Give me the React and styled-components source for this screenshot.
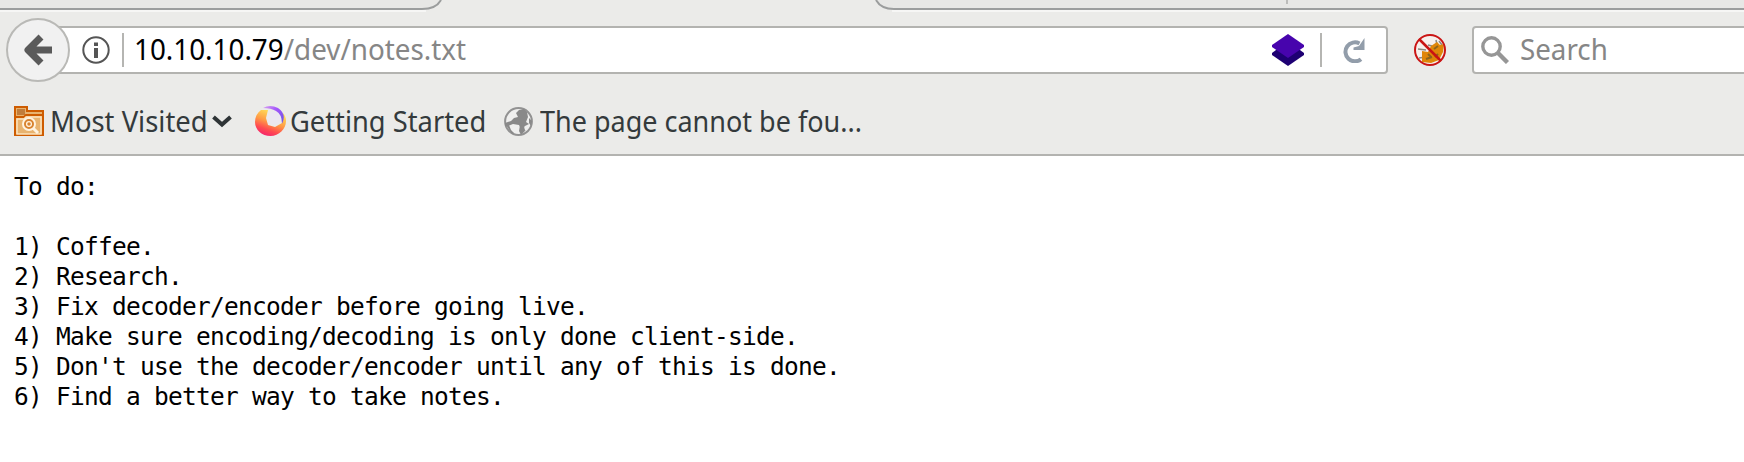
import React from "react";
import styled, { createGlobalStyle } from "styled-components";

const GlobalStyle = createGlobalStyle`
  * { box-sizing: border-box; }
  html, body { margin: 0; background: #fff; overflow: hidden; }
`;

const Browser = styled.div`
  display: flex;
  flex-direction: column;
  width: 1744px;
  height: 462px;
  background: #fff;
  font-family: "Noto Sans", "Open Sans", sans-serif;
`;

const Chrome = styled.header`
  flex: none;
  height: 156px;
  background: #ebebe9;
  border-bottom: 2px solid #b3b3b0;
`;

const TabStrip = styled.svg`
  display: block;
  width: 1744px;
  height: 12px;
`;

const NavBar = styled.div`
  display: flex;
  align-items: center;
  height: 76px;
  padding-left: 6px;
`;

const BackButton = styled.button`
  width: 64px;
  height: 64px;
  flex: none;
  padding: 0;
  display: grid;
  place-items: center;
  border: 2px solid #b9b9b6;
  border-radius: 50%;
  background: #f1f1f1;
  z-index: 1;
`;

const Field = styled.div`
  display: flex;
  align-items: center;
  flex: none;
  height: 48px;
  width: ${(p) => p.$width}px;
  margin-left: ${(p) => p.$offset}px;
  padding-left: ${(p) => p.$inset}px;
  border: 2px solid #b3b3b0;
  border-radius: 4px;
  background: #fff;
`;

const Divider = styled.span`
  flex: none;
  width: 2px;
  height: 34px;
  background: #b5b5b2;
`;

const Icon = styled.svg`
  display: block;
  flex: none;
  width: ${(p) => p.$w}px;
  height: ${(p) => p.$h}px;
  margin-left: ${(p) => p.$left || 0}px;
  margin-right: ${(p) => p.$right || 0}px;
`;

const Label = styled.span`
  flex: none;
  width: ${(p) => p.$width}px;
  margin-left: ${(p) => p.$left || 0}px;
  padding-bottom: ${(p) => p.$lift ?? 3}px;
  font-size: 29.5px;
  line-height: 40px;
  white-space: pre;
  color: ${(p) => p.$color || "#343a3c"};
`;

const Narrow = styled.span`
  display: inline-block;
  transform: scaleX(${(p) => p.$scale});
  transform-origin: 0 50%;
`;

const Path = styled.span`
  color: #868686;
`;

const BookmarksBar = styled.nav`
  display: flex;
  align-items: center;
  height: 66px;
  padding-left: 14px;
`;

const Bookmark = styled.div`
  display: flex;
  align-items: center;
  flex: none;
  width: ${(p) => p.$width}px;
`;

const Notes = styled.pre`
  margin: 0;
  padding: 16px 0 0 14px;
  font: 24.5px/30px "DejaVu Sans Mono", monospace;
  letter-spacing: -0.75px;
  color: #000;
`;

const NOTES = `To do:

1) Coffee.
2) Research.
3) Fix decoder/encoder before going live.
4) Make sure encoding/decoding is only done client-side.
5) Don't use the decoder/encoder until any of this is done.
6) Find a better way to take notes.`;

const Tabs = () => (
  <TabStrip viewBox="0 0 1744 12" fill="none">
    <path d="M0 0H441Q437 9 425 9H0ZM875 0H1744V9H894Q880 9 875 0Z" fill="#e7e7e5" />
    <path d="M0 11H426M892 11H1744" stroke="#f6f6f5" strokeWidth="2" />
    <path d="M0 9H422Q436 9 441 0M876 0Q881 9 894 9H1744" stroke="#9b9d9d" strokeWidth="2" />
    <path d="M1287 0V4" stroke="#bcbcba" strokeWidth="2" />
  </TabStrip>
);

const BackArrow = () => (
  <Icon $w={28} $h={32} viewBox="0 0 28 32" fill="none">
    <path d="M17 3 4 16l13 13M5 16H28" stroke="#5a5a5a" strokeWidth="7" strokeLinejoin="round" />
  </Icon>
);

const Info = () => (
  <Icon $w={28} $h={28} $right={12} viewBox="0 0 28 28">
    <circle cx="14" cy="14" r="12.7" fill="none" stroke="#555" strokeWidth="2" />
    <path d="M12 6.5h4v3.5h-4zM12 12h4v10h-4z" fill="#555" />
  </Icon>
);

const Layers = () => (
  <Icon $w={32} $h={32} $right={16} viewBox="0 0 32 32">
    <path d="M0 19 4 16h24l4 3v2L16 32 0 21z" fill="#1e0073" />
    <path d="M16 0 32 11v2L16 24 0 13v-2z" fill="#4704ad" />
  </Icon>
);

const Reload = () => (
  <Icon $w={24} $h={26} $left={20} viewBox="0 0 24 26">
    <path d="M19 22.200A9.500 9.500 0 1 1 17.500 6.500" fill="none" stroke="#929daa" strokeWidth="4" />
    <path d="M22.500 1v12H11.500V10.500L17 9z" fill="#929daa" />
  </Icon>
);

const Blocked = () => (
  <Icon $w={32} $h={32} $left={26} viewBox="0 0 32 32" fill="none">
    <circle cx="16" cy="16" r="15" fill="#f6f0ed" />
    <path d="M4 15l8 1M22 6l1 5M25 7l3 4M5 24l7-1M14 11l4 1" stroke="#8b8980" strokeWidth="1.5" />
    <path d="M8 17l6 1 3-6 6-4 3 3 4-1-1 8-4 8-8 3-9-1z" fill="#df8608" />
    <path d="M14 20l3 3M20 15l4-3M21 23l3-3M12 25l6-2" stroke="#8d641b" strokeWidth="2" />
    <path d="M5 5 27 27" stroke="#c91414" strokeWidth="2.5" />
    <circle cx="16" cy="16" r="15" stroke="#ca1515" strokeWidth="2" />
  </Icon>
);

const Magnifier = () => (
  <Icon $w={28} $h={28} viewBox="0 0 28 28" fill="none" stroke="#969696">
    <circle cx="10.5" cy="10.5" r="8.7" strokeWidth="3.4" />
    <path d="m17 17 9.5 9.5" strokeWidth="4.4" />
  </Icon>
);

const Folder = () => (
  <Icon $w={30} $h={30} viewBox="0 0 30 30" fill="none">
    <path d="M1 29V1h12v4h16v24z" fill="#e8b36f" stroke="#ce5c00" strokeWidth="2" />
    <path d="M3 3h8v6H3z" fill="#c17d3b" />
    <path d="M2 11h8l2-2h16" stroke="#ce5c00" strokeWidth="2" />
    <path d="M3 28V13h7l2-2h15v17z" stroke="#fbe4bf" strokeWidth="1.5" />
    <circle cx="15" cy="18" r="6" fill="#d9832f" stroke="#fff3e0" strokeWidth="2" />
    <circle cx="15" cy="18" r="2.4" stroke="#fff3e0" strokeWidth="1.3" />
    <path d="m19 22 5 5" stroke="#fff3e0" strokeWidth="3" />
  </Icon>
);

const Chevron = () => (
  <Icon $w={20} $h={14} viewBox="0 0 20 14" fill="none">
    <path d="m1.5 3 8.5 7.500 8.500-7.500" stroke="#2e3436" strokeWidth="4" />
  </Icon>
);

const Firefox = () => (
  <Icon $w={31} $h={32} viewBox="0 0 31 32">
    <defs>
      <linearGradient id="flame" x1=".75" y1=".1" x2=".35" y2="1">
        <stop offset="0" stopColor="#ffe45a" />
        <stop offset=".45" stopColor="#ff9a45" />
        <stop offset=".75" stopColor="#ff4b50" />
        <stop offset="1" stopColor="#f5246c" />
      </linearGradient>
      <linearGradient id="swirl" x1="0" y1="0" x2="1" y2=".7">
        <stop offset="0" stopColor="#d9a5f0" />
        <stop offset=".5" stopColor="#a557fb" />
        <stop offset="1" stopColor="#7556e8" />
      </linearGradient>
    </defs>
    <path d="M6 5C2 8 0 12 0 17c0 8 7 14 15.500 14S31 24 31 16c0-3-1-6-3-8l-1 10-7 4-7-2-2-7 2-8z" fill="url(#flame)" />
    <circle cx="19.500" cy="13" r="7" fill="#ebe8f0" />
    <path d="M8 3Q15-1 23 3q9 6 4 16 0-10-6-13-5-3-13-3z" fill="url(#swirl)" />
  </Icon>
);

const Globe = () => (
  <Icon $w={29} $h={29} viewBox="0 0 29 29">
    <circle cx="14.500" cy="14.500" r="13.400" fill="#efefee" stroke="#929292" strokeWidth="2" />
    <path d="M12 6l3-3 5-1 3 3 1 5-2 5 3 2-4 2-2 2 3 3-5-2-2-4-6-1-5 2-3 0 0-3 6-2 3-3 4-1z" fill="#898989" />
    <path d="M16 18l4 1 1 5-4 4-2-4zM25 11l3 3-1 5-2-3zM2 18l3 0 2 5 3 3-2 1z" fill="#898989" />
  </Icon>
);

export default function App() {
  return (
    <>
      <GlobalStyle />
      <Browser>
        <Chrome>
          <Tabs />
          <NavBar>
            <BackButton aria-label="Back"><BackArrow /></BackButton>
            <Field $width={1338} $offset={-20} $inset={30}>
              <Info />
              <Divider />
              <Label $left={10} $width={1138} $color="#000">
                <Narrow $scale={0.943}>10.10.10.79<Path>/dev/notes.txt</Path></Narrow>
              </Label>
              <Layers />
              <Divider />
              <Reload />
            </Field>
            <Blocked />
            <Field $width={300} $offset={26} $inset={7}>
              <Magnifier />
              <Label $left={11} $width={100} $color="#868686">
                <Narrow $scale={0.94}>Search</Narrow>
              </Label>
            </Field>
          </NavBar>
          <BookmarksBar>
            <Bookmark $width={241}>
              <Folder />
              <Label $left={6} $width={162} $lift={1}><Narrow $scale={0.93}>Most Visited</Narrow></Label>
              <Chevron />
            </Bookmark>
            <Bookmark $width={249}>
              <Firefox />
              <Label $left={4} $width={200} $lift={1}><Narrow $scale={0.925}>Getting Started</Narrow></Label>
            </Bookmark>
            <Bookmark $width={400}>
              <Globe />
              <Label $left={7} $width={340} $lift={1}><Narrow $scale={0.915}>The page cannot be fou...</Narrow></Label>
            </Bookmark>
          </BookmarksBar>
        </Chrome>
        <Notes>{NOTES}</Notes>
      </Browser>
    </>
  );
}
